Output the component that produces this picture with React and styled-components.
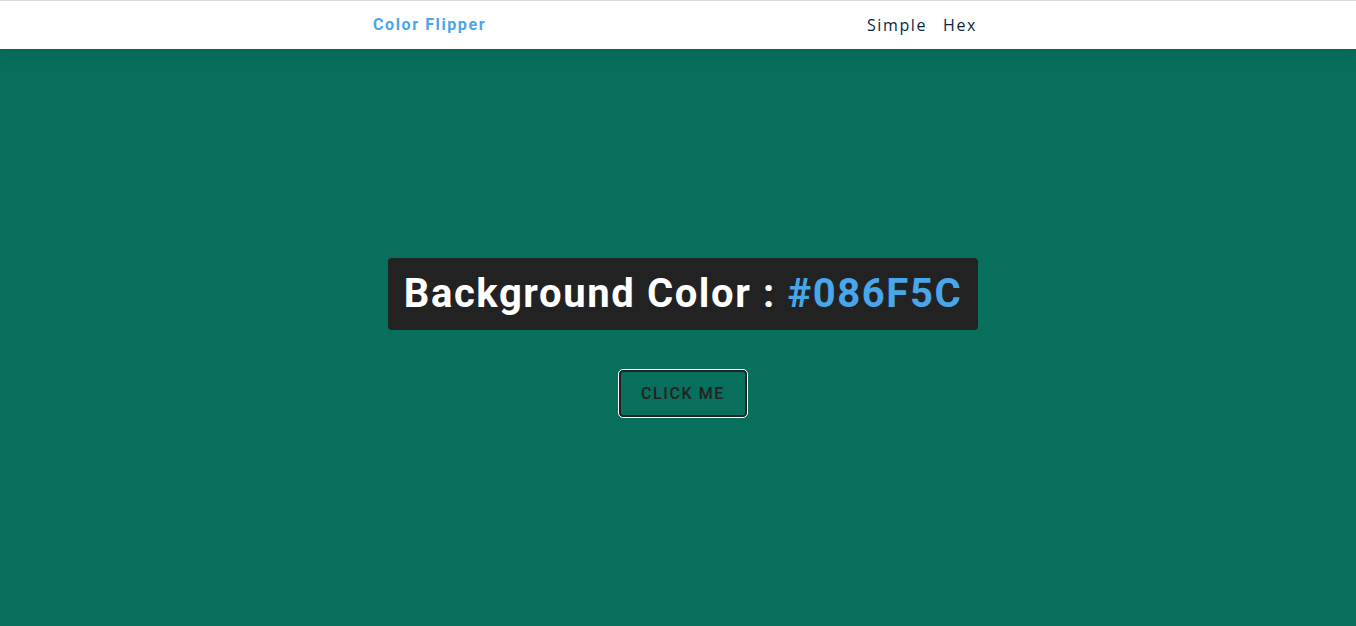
import React from 'react'
import styled, { createGlobalStyle } from 'styled-components'

const GlobalStyle = createGlobalStyle`
  * { box-sizing: border-box; margin: 0; padding: 0; }
  html, body { height: 100%; }
  body {
    font-family: Roboto, "Liberation Sans", sans-serif;
    background: #086f5c;
    overflow: hidden;
  }
`

const Nav = styled.nav`
  background: #fff;
  height: 49px;
  border-top: 1px solid #dcdcdc;
  box-shadow: 0 5px 15px rgba(0, 0, 0, 0.1);
  display: flex;
  align-items: center;
  padding-left: 10px;
  position: relative;
  z-index: 1;
`

const NavCenter = styled.div`
  width: 620px;
  margin: 0 auto;
  display: flex;
  justify-content: space-between;
  align-items: center;
  padding-right: 16px;
`

const Logo = styled.h4`
  font-family: Roboto, sans-serif;
  font-weight: 700;
  font-size: 16px;
  letter-spacing: 1.6px;
  color: #49a6e9;
  margin-top: -2px;
`

const Links = styled.ul`
  list-style: none;
  display: flex;
  gap: 16px;
`

const LinkItem = styled.li`
  font-family: "Open Sans", sans-serif;
  font-size: 16px;
  font-weight: 500;
  letter-spacing: 1.6px;
  color: #0a2540;
`

const Main = styled.main`
  height: calc(100vh - 49px);
  display: flex;
  flex-direction: column;
  align-items: center;
  justify-content: center;
  padding-left: 10px;
`

const Title = styled.h2`
  background: #222;
  color: #fff;
  font-weight: 700;
  font-size: 40px;
  letter-spacing: 1.6px;
  line-height: 48px;
  padding: 12px 16px;
  border-radius: 4px;
  margin-bottom: 40px;
`

const ColorText = styled.span`
  color: #49a6e9;
`

const HeroButton = styled.button`
  font-family: Roboto, sans-serif;
  text-transform: uppercase;
  background: transparent;
  color: #222;
  letter-spacing: 1.6px;
  font-weight: 500;
  font-size: 16px;
  width: 128px;
  height: 47px;
  border: 2px solid #222;
  border-radius: 4px;
  outline: 1px solid #fff;
  outline-offset: 0;
  cursor: pointer;
`

export default function App() {
  const color = '#086F5C'
  return (
    <>
      <GlobalStyle />
      <Nav>
        <NavCenter>
          <Logo>Color Flipper</Logo>
          <Links>
            <LinkItem>Simple</LinkItem>
            <LinkItem>Hex</LinkItem>
          </Links>
        </NavCenter>
      </Nav>
      <Main>
        <Title>
          Background Color : <ColorText>{color}</ColorText>
        </Title>
        <HeroButton>Click me</HeroButton>
      </Main>
    </>
  )
}
